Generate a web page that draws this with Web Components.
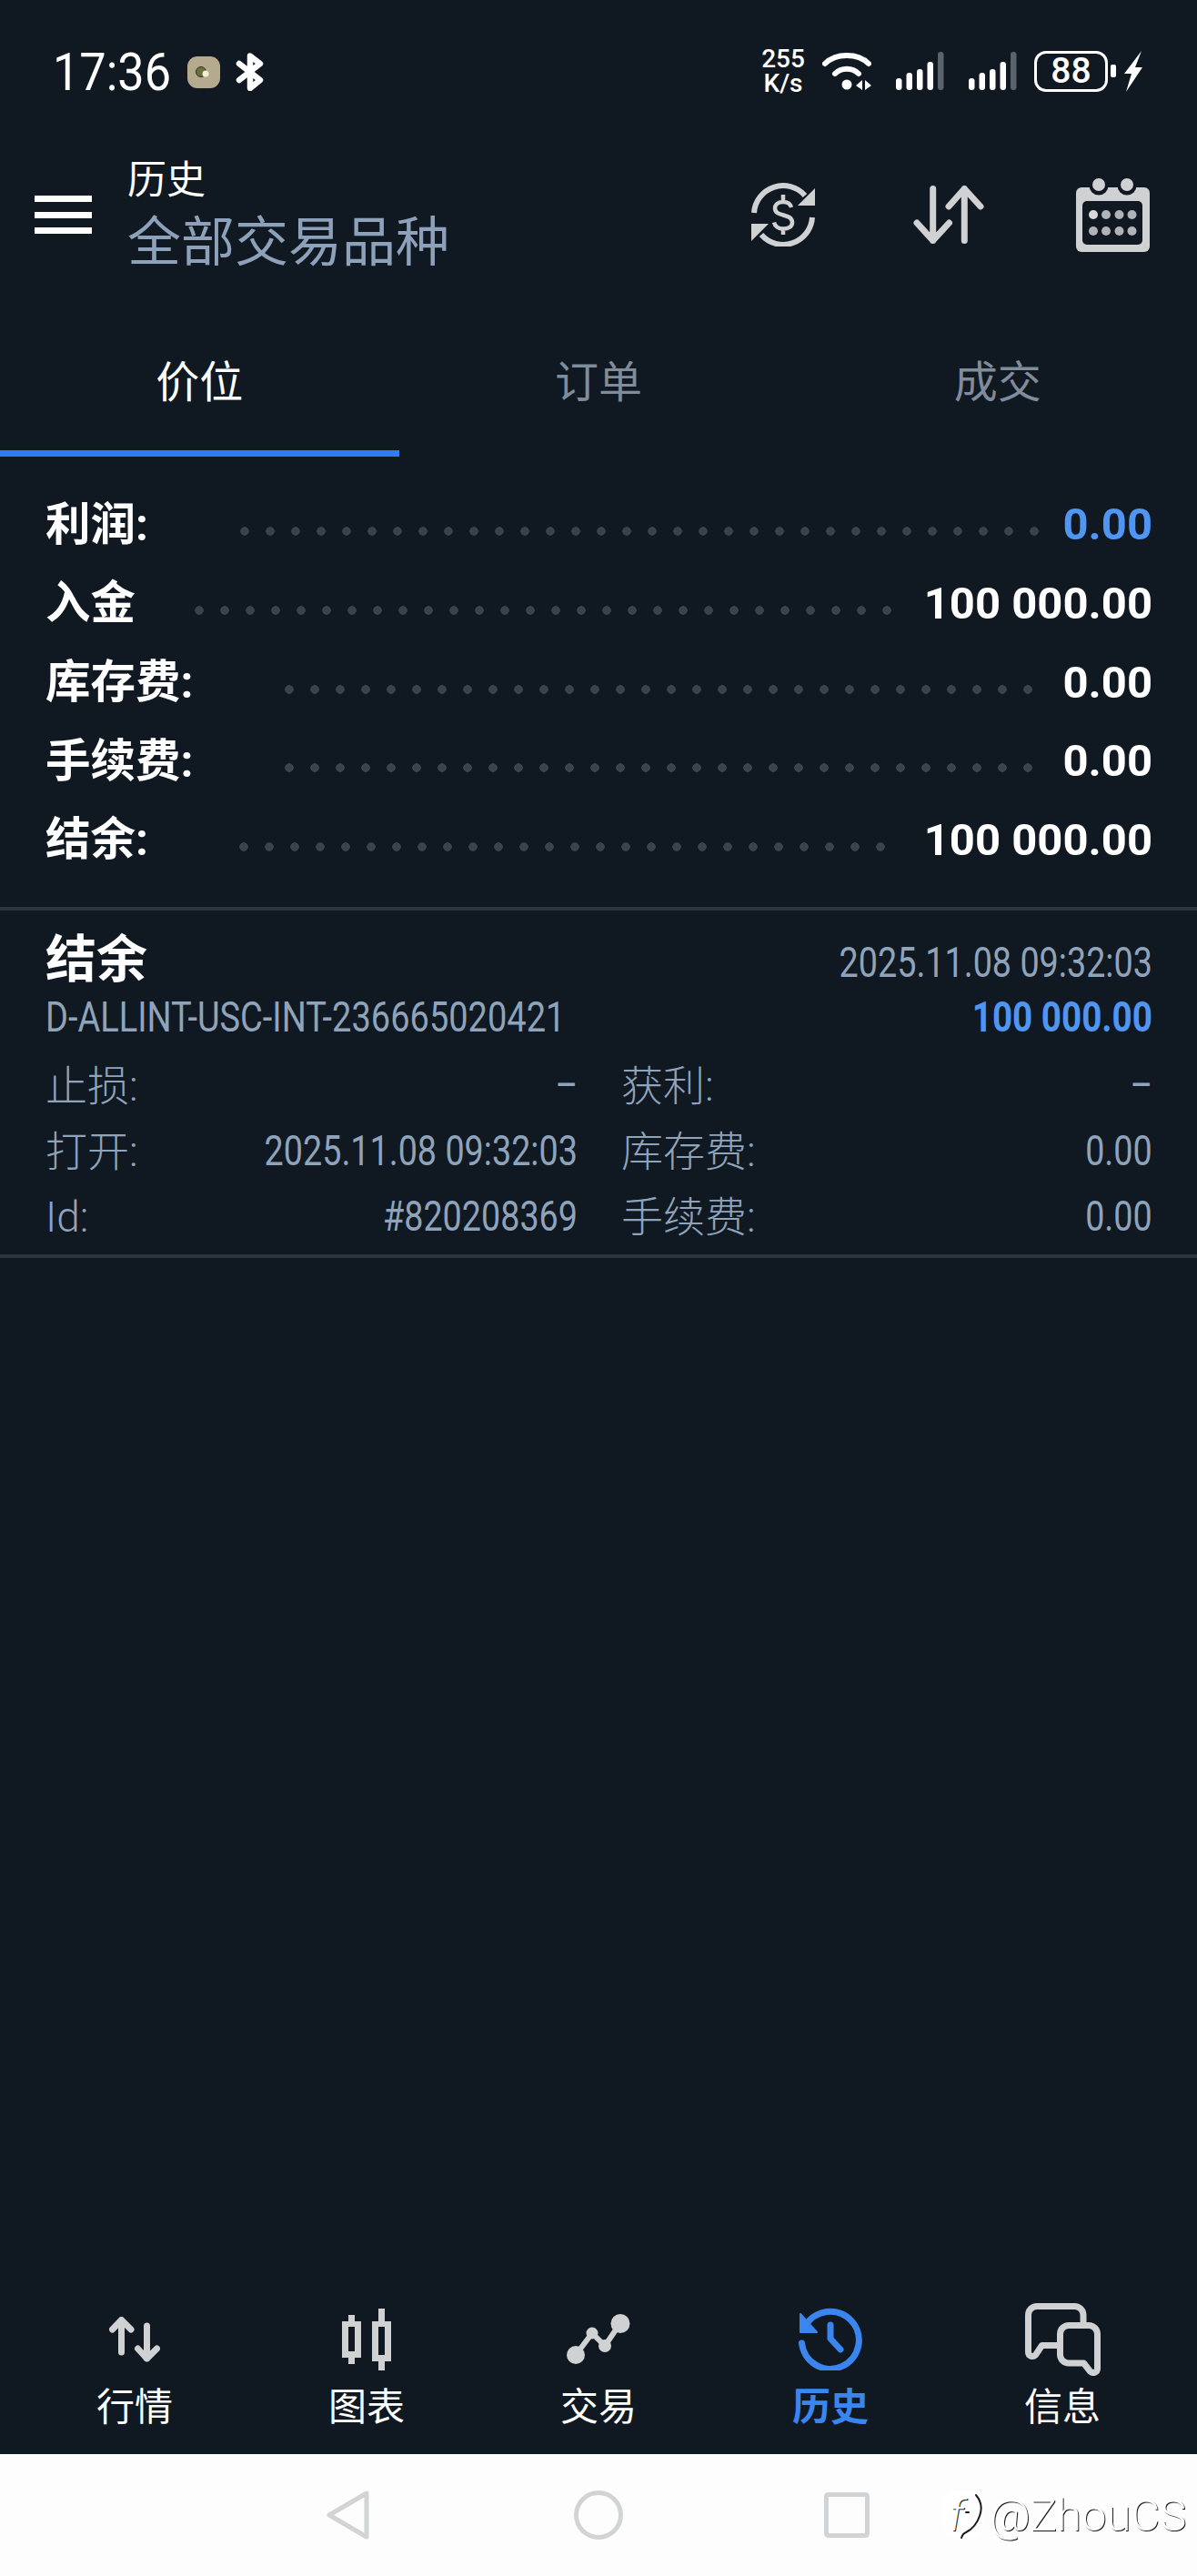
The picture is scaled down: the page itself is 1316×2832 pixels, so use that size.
<!DOCTYPE html>
<html lang="zh">
<head>
<meta charset="utf-8">
<style>
  html, body { margin: 0; background: #101821; }
  body { width: 1316px; height: 2832px; display: flex; flex-direction: column; overflow: hidden;
    font-family: Roboto, "Noto Sans CJK SC", sans-serif; }
  .spacer { flex: 1; }
</style>
</head>
<body>
<status-bar></status-bar>
<app-header title="历史" subtitle="全部交易品种"></app-header>
<tab-bar></tab-bar>
<history-summary>
  <summary-row label="利润:" value="0.00" first="268.5" count="32" accent></summary-row>
  <summary-row label="入金" value="100 000.00" first="219" count="28"></summary-row>
  <summary-row label="库存费:" value="0.00" first="317.5" count="30"></summary-row>
  <summary-row label="手续费:" value="0.00" first="317.5" count="30"></summary-row>
  <summary-row label="结余:" value="100 000.00" first="268" count="26"></summary-row>
</history-summary>
<deal-card></deal-card>
<div class="spacer"></div>
<bottom-nav></bottom-nav>
<system-nav></system-nav>

<script>
const CJK = 'Roboto, "Noto Sans CJK SC", sans-serif';
const ICON = '#d0d1d3';
const BG = '#101821';

class SignalBars extends HTMLElement {
  constructor() {
    super();
    this.attachShadow({ mode: 'open' });
    this.shadowRoot.innerHTML = `
      <style>:host { display: block; } svg { display: block; }</style>
      <svg width="53" height="42" viewBox="0 0 53 42" fill="#fff">
        <rect x="0" y="29" width="6.5" height="13" rx="3"/>
        <rect x="11.5" y="23" width="6.5" height="19" rx="3"/>
        <rect x="23" y="19" width="6.5" height="23" rx="3"/>
        <rect x="34.5" y="11" width="6.5" height="31" rx="3"/>
        <rect x="46" y="0" width="6.5" height="42" rx="3" fill="#5a626c"/>
      </svg>`;
  }
}
customElements.define('signal-bars', SignalBars);

class StatusBar extends HTMLElement {
  constructor() {
    super();
    this.attachShadow({ mode: 'open' });
    this.shadowRoot.innerHTML = `
      <style>
        :host { display: flex; align-items: center; height: 156px; padding: 0 60px 0 58px; box-sizing: border-box; color: #fff; flex: none; }
        .time { font: 400 58px/1 Roboto, sans-serif; display: inline-block; width: 127px; white-space: nowrap; transform: scaleX(.9); transform-origin: left; }
        .left { display: flex; align-items: center; margin-top: 2px; }
        .right { margin-left: auto; display: flex; align-items: center; }
        .speed { font: 500 28px/27px Roboto, sans-serif; text-align: center; width: 48px; }
        .batt { margin-left: 19px; width: 81px; height: 45px; border: 3.5px solid #fff; border-radius: 13px; box-sizing: border-box; display: flex; align-items: center; justify-content: center; font: 500 39px/1 Roboto, sans-serif; }
        .nub { margin-left: 3px; width: 6px; height: 14px; background: #fff; border-radius: 2px; }
        svg { display: block; }
      </style>
      <div class="left">
        <span class="time">17:36</span>
        <svg style="margin-left:21px" width="36" height="35" viewBox="0 0 36 35"><rect width="36" height="35" rx="11" fill="#b5a98e"/><circle cx="15" cy="17" r="5.500" fill="#6d6f3c" stroke="#2c3328" stroke-width="1"/><circle cx="20" cy="19" r="3.500" fill="#f2efd0"/></svg>
        <svg style="margin-left:17px" width="31" height="42" viewBox="0 0 31 42" fill="none" stroke="#fff" stroke-width="6.500" stroke-linejoin="round" stroke-linecap="round"><path d="M4 12l23 18-11 9V3.500L27 12 4 30"/></svg>
      </div>
      <div class="right">
        <div class="speed">255 K/s</div>
        <svg style="margin-left:19px" width="54" height="42" viewBox="0 0 54 42" fill="none" stroke="#fff" stroke-width="6" stroke-linecap="round"><path d="M3 13C15 1 39 1 51 13"/><path d="M14 24c7-7 19-7 26 0"/><circle cx="27" cy="36" r="5.500" fill="#fff" stroke="none"/><path d="M37 37l7-6v11zM47 31l7 6-7 5z" fill="#fff" stroke="none"/></svg>
        <signal-bars style="margin-left:27px"></signal-bars>
        <signal-bars style="margin-left:27px"></signal-bars>
        <div class="batt">88</div>
        <div class="nub"></div>
        <svg style="margin-left:9px" width="20" height="45" viewBox="0 0 20 45"><path d="M19 0L0 25h8L2 45l18-27h-8z" fill="#fff"/></svg>
      </div>`;
  }
}
customElements.define('status-bar', StatusBar);

class AppHeader extends HTMLElement {
  constructor() {
    super();
    this.attachShadow({ mode: 'open' });
    this.shadowRoot.innerHTML = `
      <style>
        :host { display: flex; align-items: center; height: 160px; padding: 0 52px 0 38px; box-sizing: border-box; flex: none; color: #fff; font-family: ${CJK}; }
        .menu { width: 63px; height: 42px; display: flex; flex-direction: column; justify-content: space-between; margin-right: 39px; }
        .menu i { display: block; height: 7px; background: #fff; }
        .titles { display: flex; flex-direction: column; align-self: flex-start; margin-top: 17px; }
        .t { font-size: 43px; line-height: 50px; }
        .s { font-size: 59px; line-height: 78px; margin-top: 5px; color: #8da2ba; }
        .icons { margin-left: auto; display: flex; align-items: center; }
        svg { display: block; }
      </style>
      <div class="menu"><i></i><i></i><i></i></div>
      <div class="titles"><span class="t"></span><span class="s"></span></div>
      <div class="icons">
        <svg width="70" height="70" viewBox="0 0 70 70" fill="none" stroke="${ICON}" stroke-width="6">
          <path d="M3 33A32 32 0 0 1 59 14"/>
          <path d="M67 38A32 32 0 0 1 11 57"/>
          <path d="M70 6v19H51z" fill="${ICON}" stroke="none"/>
          <path d="M0 64V45h19z" fill="${ICON}" stroke="none"/>
          <path d="M44 27c-1-4-4.500-6-9-6-5.500 0-9 3-9 7 0 10 19 5 19 15.500 0 4.500-4 7-10 7-5 0-9-2.500-10-7M35 13v8M35 50v7" stroke-width="4.500"/>
        </svg>
        <svg style="margin-left:108px" width="78" height="64" viewBox="0 0 78 64" fill="none" stroke="${ICON}" stroke-width="7" stroke-linecap="round" stroke-linejoin="round">
          <path d="M21.700 3.500v57M4 41l17.700 19.500L39.500 41"/>
          <path d="M56.300 60.500v-57M39 23L56.300 3.500 74 23"/>
        </svg>
        <svg style="margin-left:101px" width="81" height="81" viewBox="0 0 81 81">
          <rect y="10" width="81" height="71" rx="6" fill="${ICON}"/>
          <rect x="7" y="25" width="66" height="48" rx="5" fill="${BG}"/>
          <circle cx="25" cy="8" r="10.500" fill="${BG}"/><circle cx="56" cy="8" r="10.500" fill="${BG}"/>
          <circle cx="25" cy="7" r="7" fill="${ICON}"/><circle cx="56" cy="7" r="7" fill="${ICON}"/>
          <g fill="#b0b3b8">
            <circle cx="19" cy="40" r="5" fill="#d8d8da"/><circle cx="33" cy="40" r="5"/><circle cx="47.500" cy="40" r="5"/><circle cx="61.500" cy="40" r="5"/>
            <circle cx="19" cy="58" r="5"/><circle cx="33" cy="58" r="5"/><circle cx="47.500" cy="58" r="5"/><circle cx="61.500" cy="58" r="5"/>
          </g>
        </svg>
      </div>`;
    this.shadowRoot.querySelector('.t').textContent = this.getAttribute('title');
    this.shadowRoot.querySelector('.s').textContent = this.getAttribute('subtitle');
  }
}
customElements.define('app-header', AppHeader);

class TabBar extends HTMLElement {
  constructor() {
    super();
    this.attachShadow({ mode: 'open' });
    this.shadowRoot.innerHTML = `
      <style>
        :host { display: grid; grid-template-columns: repeat(3, 1fr); height: 186px; flex: none; font-family: ${CJK}; }
        .tab { display: flex; align-items: center; justify-content: center; box-sizing: border-box; padding-top: 21px; font-size: 48px; color: #7f8c9b; border-bottom: 7px solid transparent; }
        .on { color: #fff; border-bottom-color: #2f7bf2; }
      </style>
      <div class="tab on">价位</div><div class="tab">订单</div><div class="tab">成交</div>`;
  }
}
customElements.define('tab-bar', TabBar);

class HistorySummary extends HTMLElement {
  constructor() {
    super();
    this.attachShadow({ mode: 'open' });
    this.shadowRoot.innerHTML = `
      <style>
        :host { display: flex; flex-direction: column; flex: none; height: 495px; padding-top: 30px; box-sizing: border-box; }
      </style>
      <slot></slot>`;
  }
}
customElements.define('history-summary', HistorySummary);

class SummaryRow extends HTMLElement {
  constructor() {
    super();
    this.attachShadow({ mode: 'open' });
    const first = +this.getAttribute('first');
    const count = +this.getAttribute('count');
    const left = first - 5 - 50;
    const width = (count - 1) * 28 + 10;
    this.shadowRoot.innerHTML = `
      <style>
        :host { display: grid; grid-template-columns: ${left}px ${width}px 1fr; align-items: center; height: 86.7px; padding: 0 49px 0 50px; color: #fff; font-family: ${CJK}; }
        .l { font-size: 49.5px; font-weight: 700; line-height: 1; white-space: nowrap; margin-top: 4px; }
        .v { font: 700 49px/1 Roboto, sans-serif; margin-top: 3px; justify-self: end; white-space: nowrap; }
        :host([accent]) .v { color: #4f95f2; }
        .dots { height: 10px; margin-top: 18px; background: radial-gradient(circle at 5px 5px, #3a424e 4.500px, transparent 5px) 0 0 / 28px 10px repeat-x; }
      </style>
      <span class="l"></span><span class="dots"></span><span class="v"></span>`;
    this.shadowRoot.querySelector('.l').textContent = this.getAttribute('label');
    this.shadowRoot.querySelector('.v').textContent = this.getAttribute('value');
  }
}
customElements.define('summary-row', SummaryRow);

class DealCard extends HTMLElement {
  constructor() {
    super();
    this.attachShadow({ mode: 'open' });
    const cell = (l, v) => `<div class="cell"><span class="lb">${l}</span><span class="nv">${v}</span></div>`;
    this.shadowRoot.innerHTML = `
      <style>
        :host { display: block; flex: none; height: 386px; padding: 24px 49px 0 50px; box-sizing: border-box; border-top: 4px solid #2b3441; border-bottom: 4px solid #2b3441; font-family: ${CJK}; color: #8fa3ba; }
        .top { display: flex; justify-content: space-between; align-items: flex-start; height: 54px; }
        .name { font-size: 56px; font-weight: 700; color: #fff; line-height: 54px; margin-top: 3px; }
        .nv, .date, .sym, .amt { display: inline-block; white-space: nowrap; font-family: Roboto, sans-serif; font-size: 46px; line-height: 46px; }
        .date, .nv { transform: scaleX(.82); transform-origin: right; }
        .amt { transform: scaleX(.84); transform-origin: right; color: #4f95f2; font-weight: 700; }
        .date { margin-top: 10px; }
        .sym { transform: scaleX(.826); transform-origin: left; }
        .second { display: flex; justify-content: space-between; align-items: center; height: 46px; margin-top: 16px; }
        .grid { display: grid; grid-template-columns: 585px 584px; column-gap: 48px; margin-top: 16px; grid-auto-rows: 72px; }
        .cell { display: flex; justify-content: space-between; align-items: center; }
        .lb { font-size: 46px; font-weight: 300; line-height: 1; white-space: nowrap; margin-top: 2px; }
      </style>
      <div class="top"><span class="name">结余</span><span class="date">2025.11.08 09:32:03</span></div>
      <div class="second"><span class="sym">D-ALLINT-USC-INT-236665020421</span><span class="amt">100 000.00</span></div>
      <div class="grid">
        ${cell('止损:', '–')}${cell('获利:', '–')}
        ${cell('打开:', '2025.11.08 09:32:03')}${cell('库存费:', '0.00')}
        ${cell('Id:', '#820208369')}${cell('手续费:', '0.00')}
      </div>`;
  }
}
customElements.define('deal-card', DealCard);

class BottomNav extends HTMLElement {
  constructor() {
    super();
    this.attachShadow({ mode: 'open' });
    const blue = '#3b85f0';
    const items = [
      ['行情', `<svg width="56" height="50" viewBox="0 0 56 50" fill="none" stroke="${ICON}" stroke-width="7" stroke-linecap="round" stroke-linejoin="round"><path d="M13.500 39V3.500M3.500 14l10-10.500L24 14"/><path d="M41.500 10v36M31.500 35l10 11 11-11"/></svg>`],
      ['图表', `<svg width="54" height="68" viewBox="0 0 54 68" fill="${ICON}"><path fill-rule="evenodd" d="M7 7h7v7h7v40h-7v7H7v-7H0V14h7zM7 20v27h7V20z"/><path fill-rule="evenodd" d="M40 0h7v14h7v44h-7v10h-7V58h-7V14h7zM40 20v31h7V20z"/></svg>`],
      ['交易', `<svg width="70" height="56" viewBox="0 0 70 56"><path d="M10 45L28 21l14 14L59 10" fill="none" stroke="${ICON}" stroke-width="6"/><circle cx="10" cy="45" r="10" fill="${ICON}"/><circle cx="28" cy="21" r="6.500" fill="${ICON}"/><circle cx="42" cy="35" r="7" fill="${ICON}"/><circle cx="59" cy="10.500" r="10.500" fill="${ICON}"/></svg>`],
      ['历史', `<svg style="margin-top:-2px" width="70" height="70" viewBox="0 0 70 70" fill="none" stroke="${blue}" stroke-width="7" stroke-linecap="round" stroke-linejoin="round"><path d="M7 22A31.500 31.500 0 1 1 3.500 40"/><path d="M2 8v20h18z" fill="${blue}" stroke-width="2"/><path d="M35 20v15l11 12"/></svg>`],
      ['信息', `<svg width="83" height="80" viewBox="0 0 83 80" fill="none" stroke="${ICON}" stroke-width="7" stroke-linejoin="round" stroke-linecap="round"><path d="M64 20v-7a9.500 9.500 0 0 0-9.500-9.500H13A9.500 9.500 0 0 0 3.500 13v41c0 4 5 6 8 3l7-10.500H35"/><path d="M48 24.500h22a9.500 9.500 0 0 1 9.500 9.500v38c0 4-5 6-8 3l-7-9H48a9.500 9.500 0 0 1-9.500-9.500V34a9.500 9.500 0 0 1 9.500-9.500z"/></svg>`]
    ];
    this.shadowRoot.innerHTML = `
      <style>
        :host { display: grid; grid-template-columns: repeat(5, 255px); justify-content: center; height: 176px; flex: none; font-family: ${CJK}; color: #fff; }
        .item { display: flex; flex-direction: column; align-items: center; }
        .ic { height: 100px; display: flex; align-items: center; justify-content: center; }
        .lb { font-size: 42px; line-height: 50px; }
        .on .lb { color: ${blue}; font-weight: 700; }
        svg { display: block; }
      </style>
      ${items.map(([t, ic], i) => `<div class="item ${i === 3 ? 'on' : ''}"><div class="ic">${ic}</div><div class="lb">${t}</div></div>`).join('')}`;
  }
}
customElements.define('bottom-nav', BottomNav);

class SystemNav extends HTMLElement {
  constructor() {
    super();
    this.attachShadow({ mode: 'open' });
    this.shadowRoot.innerHTML = `
      <style>
        :host { display: flex; align-items: center; height: 134px; background: #fdfdfd; flex: none; position: relative; padding-left: 359px; box-sizing: border-box; }
        svg { display: block; }
        .mark { position: absolute; left: 1037px; top: 40px; display: flex; align-items: center; height: 54px; }
        .txt { font: 300 49px/1 Roboto, sans-serif; color: #fff; text-shadow: 1px 1px 0 #1a1a1a; white-space: nowrap; margin-left: 7px; }
        .logo { position: relative; width: 44px; height: 52px; background: #fff; border-radius: 14px; }
        .logo svg { position: absolute; left: 0; top: 0; }
        .f { position: absolute; left: 7px; top: 3px; font: italic 300 48px/1 Roboto, sans-serif; color: #fff; text-shadow: 1px 1px 0 #1a1a1a; }
      </style>
      <svg width="47" height="54" viewBox="0 0 47 54" fill="none" stroke="#d2d3d4" stroke-width="5" stroke-linejoin="round"><path d="M3 27L44 3v48z"/></svg>
      <svg style="margin-left:225px" width="54" height="54" viewBox="0 0 54 54" fill="none" stroke="#d2d3d4" stroke-width="5"><circle cx="27" cy="27" r="24.500"/></svg>
      <svg style="margin-left:221px" width="50" height="50" viewBox="0 0 50 50" fill="none" stroke="#d2d3d4" stroke-width="5" stroke-linejoin="round"><rect x="2.500" y="2.500" width="45" height="45" rx="2"/></svg>
      <div class="mark">
        <div class="logo">
          <svg width="44" height="52" viewBox="0 0 44 52" fill="none" stroke="#1a1a1a" stroke-width="2" stroke-linecap="round"><path d="M36 4c6 7 7 15 4 23-3 9-9 15-15 18-3 1-4 3-5 6"/><path d="M25 23h3"/></svg>
          <span class="f">f</span>
        </div>
        <span class="txt">@ZhouCS</span>
      </div>`;
  }
}
customElements.define('system-nav', SystemNav);
</script>
</body>
</html>
